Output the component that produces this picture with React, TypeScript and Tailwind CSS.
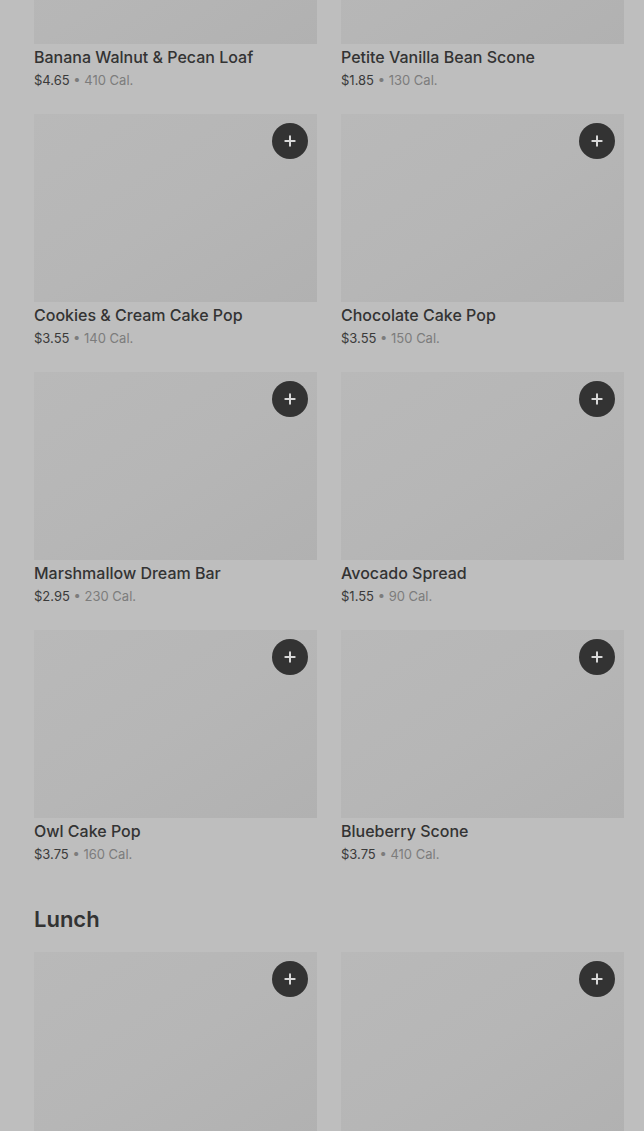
import { Plus } from "lucide-react";

type Item = { name: string; price: string; cal: string };

const bakery: Item[] = [
  { name: "Banana Walnut & Pecan Loaf", price: "$4.65", cal: "410 Cal." },
  { name: "Petite Vanilla Bean Scone", price: "$1.85", cal: "130 Cal." },
  { name: "Cookies & Cream Cake Pop", price: "$3.55", cal: "140 Cal." },
  { name: "Chocolate Cake Pop", price: "$3.55", cal: "150 Cal." },
  { name: "Marshmallow Dream Bar", price: "$2.95", cal: "230 Cal." },
  { name: "Avocado Spread", price: "$1.55", cal: "90 Cal." },
  { name: "Owl Cake Pop", price: "$3.75", cal: "160 Cal." },
  { name: "Blueberry Scone", price: "$3.75", cal: "410 Cal." },
];

const ItemImage = () => (
  <div className="relative h-[188px] bg-gradient-to-br from-[#b9b9b9] via-[#b6b6b6] to-[#b1b1b1]">
    <button className="absolute top-[9px] right-[9px] w-9 h-9 rounded-full bg-[#333333] flex items-center justify-center text-[#d9d9d9]">
      <Plus size={16} strokeWidth={3} />
    </button>
  </div>
);

const ItemCard = ({ item }: { item: Item }) => (
  <div className="flex flex-col">
    <ItemImage />
    <div className="mt-[3px] text-[16px] leading-5 font-medium text-[#333333]">{item.name}</div>
    <div className="mt-1 text-[13px] leading-[18px] text-[#3a3a3a]">
      {item.price}
      <span className="text-[#7c7c7c]"> • {item.cal}</span>
    </div>
  </div>
);

export default function App() {
  return (
    <div
      className="min-h-screen bg-[#bebebe] overflow-hidden"
      style={{ fontFamily: "Inter, 'Noto Sans', sans-serif" }}
    >
      <div className="pl-[34px] pr-5 h-[1131px] overflow-hidden">
        <div className="-mt-[144px] grid grid-cols-2 gap-x-6 gap-y-[25px]">
          {bakery.map((item) => (
            <ItemCard key={item.name} item={item} />
          ))}
        </div>
        <h2 className="mt-[42px] text-[22px] leading-7 font-semibold text-[#333333]">Lunch</h2>
        <div className="mt-[19px] grid grid-cols-2 gap-x-6">
          <ItemImage />
          <ItemImage />
        </div>
      </div>
    </div>
  );
}
